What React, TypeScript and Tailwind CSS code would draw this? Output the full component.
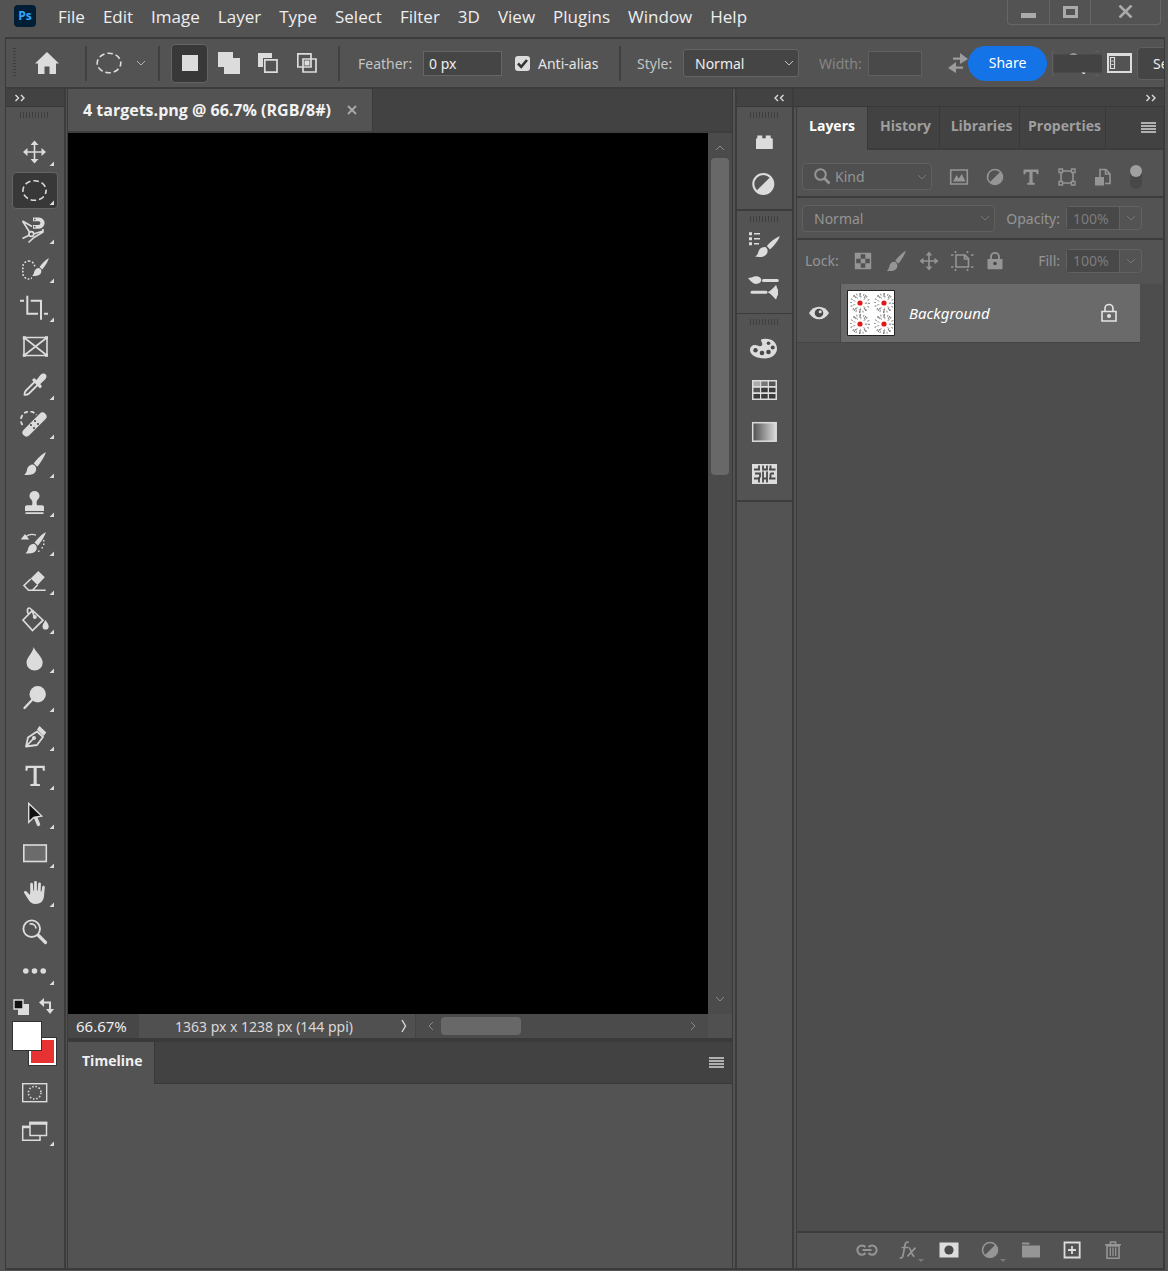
import React from 'react';
import { clsx } from 'clsx';

const menus = ['File', 'Edit', 'Image', 'Layer', 'Type', 'Select', 'Filter', '3D', 'View', 'Plugins', 'Window', 'Help'];

const BRUSH_HANDLE = 'M24.8 2c-4.2 2.2-9 7.4-12 11.4l3.4 3.4c3.4-3.8 7.6-10.4 8.6-14.8z';
const BRUSH_TIP =
  'M11.8 14.6c-3 0-5.2 2.4-5.8 5.2-.4 2.2-1.2 4-2.8 5 4.4.7 9.6.3 11.4-3.2.9-1.9.8-3.7-.2-5.1-.6-.9-1.5-1.7-2.6-1.9z';

function Brush({ transform }: { transform?: string }) {
  return <path transform={transform} d={`${BRUSH_HANDLE} ${BRUSH_TIP}`} />;
}

// every glyph is drawn in the same 28px box, light fill by default
const line = { fill: 'none', stroke: 'currentColor', strokeWidth: 1.6 };

const tools: { label: string; icon: React.ReactNode; active?: boolean; single?: boolean }[] = [
  {
    label: 'Move Tool',
    icon: (
      <>
        <path d="M13.5 5v18M4.500 14h18" {...line} />
        <path d="M13.500 2.500l4 4.500h-8zM13.500 25.500l4-4.500h-8zM2 14l4.500-4v8zM25 14l-4.500-4v8z" />
      </>
    ),
  },
  {
    label: 'Elliptical Marquee Tool',
    active: true,
    icon: <ellipse cx="13.5" cy="13.5" rx="11.6" ry="9.8" {...line} strokeDasharray="5.6 2.9" strokeDashoffset="2" />,
  },
  {
    label: 'Magnetic Lasso Tool',
    icon: (
      <>
        <path d="M1.500 5l7.300 11.500M1.500 5l9.500 5.500M1.500 22.500l7-3.500M7.500 26.500l5.500-5 9-5.500v-3M12.500 18l9.500-3" {...line} />
        <circle cx="10.300" cy="18" r="2.400" {...line} />
        <path d="M12 1.500h6a5.600 5.600 0 0 1 0 11.200h-6V9h5.500a1.900 1.900 0 0 0 0-3.800H12z" />
        <path d="M13 2.700h1.500v1.500H13zM13 10h1.500v1.500H13z" fill="#535353" />
      </>
    ),
  },
  {
    label: 'Quick Selection Tool',
    icon: (
      <>
        <rect x="1.800" y="6" width="12" height="18" rx="6" {...line} strokeDasharray="1.700 1.700" />
        <path d="M11 15l5-5 8 2-6 12h-7z" fill="#535353" />
        <Brush transform="translate(8.500 1.500) scale(.78)" />
      </>
    ),
  },
  {
    label: 'Crop Tool',
    icon: <path d="M-1 6.700h4M9.700 6.700H20v19M6.300 1.700v18H17M23 19.700h4" {...line} strokeWidth="2" />,
  },
  {
    label: 'Frame Tool',
    single: true,
    icon: (
      <>
        <path d="M3 4.500h23v18H3zM3 4.500l23 18M26 4.500l-23 18" {...line} />
        <path d="M1.800 3.300h3v3h-3zM24 3.300h3v3h-3zM1.800 20.800h3v3h-3zM24 20.800h3v3h-3z" />
      </>
    ),
  },
  {
    label: 'Eyedropper Tool',
    icon: (
      <>
        <path d="M14.500 9L5 18.500c-1 1-1.500 2.500-1.500 4.300 1.800.2 3.400-.3 4.500-1.300L17.500 12" {...line} strokeWidth="1.800" />
        <path d="M11 8l2-2 2.500 2 3.500-4.500c2-2.400 4.700-2.300 5.800-1 1.100 1.300 1 3.500-1 5.200L19.300 12l1.700 2.500-2 2z" />
      </>
    ),
  },
  {
    label: 'Spot Healing Brush Tool',
    icon: (
      <>
        <path d="M1.500 14A8 8 0 1 1 15.500 4" {...line} strokeWidth="1.800" strokeDasharray="4 2.500" />
        <path d="M5.500 21.500L21.500 5.500" stroke="currentColor" strokeWidth="8" strokeLinecap="round" />
        <g fill="#444">
          <circle cx="10" cy="14" r="1" /><circle cx="13" cy="17" r="1" /><circle cx="14" cy="10" r="1" />
          <circle cx="17" cy="13" r="1" />
        </g>
      </>
    ),
  },
  { label: 'Brush Tool', icon: <Brush /> },
  {
    label: 'Clone Stamp Tool',
    icon: (
      <path d="M13.500 2a5 5 0 0 0-2.700 9.200c.8.900.7 3.400.2 5.100H6c-1.300 0-2 .8-2 2V22h19v-3.700c0-1.200-.7-2-2-2h-5c-.5-1.700-.6-4.200.2-5.100A5 5 0 0 0 13.500 2zM4.500 23.200h18V25h-18z" />
    ),
  },
  {
    label: 'History Brush Tool',
    icon: (
      <>
        <path d="M-.3 11.500L4 6l4.200 5.500z" />
        <path d="M5 8.500c3-2.300 6.500-2.600 10-1.300" {...line} strokeWidth="1.300" />
        <Brush transform="translate(1.500 2) scale(.94)" />
        <path d="M22 12h1.500v1.500H22zM22 15.500h1.500V17H22zM20.500 19H22v1.500h-1.500zM17 22.500h1.500V24H17z" />
      </>
    ),
  },
  {
    label: 'Eraser Tool',
    icon: (
      <>
        <path d="M17.300 4l6.500 6.300-7.300 7.700-6.800-6.500z" />
        <path d="M9.700 12L3 18.500l4.500 4.800h4L16.500 18M8 23.300h16.700" {...line} />
      </>
    ),
  },
  {
    label: 'Paint Bucket Tool',
    icon: (
      <>
        <path d="M2 14L11.500 4.500 22 14.200 11.500 24.500zM7.500 8.500C5.500 4 6.500 1.800 8.500 2c2 .2 3 3 4.500 8" {...line} strokeWidth="1.700" />
        <circle cx="13.800" cy="11" r="2" />
        <path d="M24.500 14c1 2.200 3.200 4 3.200 6.400a3.100 3.100 0 0 1-6.200 0c0-2.400 2-4.200 3-6.400z" />
      </>
    ),
  },
  { label: 'Blur Tool', icon: <path d="M12.700 2c1.200 4.500 9 9.500 9 15.500a8.100 8 0 0 1-16.200 0C5.500 12.500 11.700 8 12.700 2z" /> },
  {
    label: 'Dodge Tool',
    icon: (
      <>
        <circle cx="16.700" cy="10.300" r="8.200" />
        <path d="M12 15l-8.500 9" stroke="currentColor" strokeWidth="2.400" strokeLinecap="round" />
      </>
    ),
  },
  {
    label: 'Pen Tool',
    icon: (
      <>
        <path d="M5 23.500l2-9 9-6 6 5.500-6 8zM5 23.500l7-7.500" {...line} strokeWidth="1.800" strokeLinejoin="round" />
        <circle cx="13" cy="15" r="2" />
        <path d="M18.500 3l6.800 6.500-2.800 3.500-6.500-6.500z" />
      </>
    ),
  },
  {
    label: 'Horizontal Type Tool',
    icon: <path d="M4.500 3.800h19.300v5h-1.900l-.5-2.700h-5.700v15.700l3.300.5V24H9.300v-1.700l3.300-.5V6.100H6.900l-.5 2.700H4.500z" />,
  },
  {
    label: 'Path Selection Tool',
    icon: (
      <>
        <path d="M14 15l3.500 8.500" stroke="currentColor" strokeWidth="3.400" strokeLinecap="round" />
        <path d="M7.700 2.500v18.800l5-4.800 8-1.500z" fill="#111" stroke="currentColor" strokeWidth="1.400" />
      </>
    ),
  },
  {
    label: 'Rectangle Tool',
    icon: <rect x="2.800" y="5" width="22.500" height="16.500" fill="#6b6b6b" stroke="currentColor" strokeWidth="1.600" />,
  },
  {
    label: 'Hand Tool',
    icon: (
      <path d="M9.200 14.500V5.200c0-2 2.700-2 2.800 0l.3 6.300h.8V3.300c0-1.900 2.800-1.900 2.800 0v8.200h.8L17.200 5c.1-2 2.700-1.800 2.700 0l-.2 7.500h.8l.7-4.500c.3-1.800 2.700-1.500 2.600.3L23 17c-.3 5-3.500 8-8.500 8-3.400 0-5.400-1.700-7-4.300L3.200 14c-.9-1.700 1.200-2.800 2.500-1.500l3 3.200z" />
    ),
  },
  {
    label: 'Zoom Tool',
    single: true,
    icon: (
      <>
        <circle cx="10.700" cy="10.700" r="8.300" {...line} strokeWidth="1.900" />
        <path d="M8.500 6c3.500-.7 6 1 6.600 4.500" {...line} />
        <path d="M17.500 17.500l7 7" stroke="currentColor" strokeWidth="3.200" strokeLinecap="round" />
      </>
    ),
  },
  {
    label: 'Edit Toolbar',
    icon: (
      <>
        <circle cx="4.800" cy="14" r="2.800" /><circle cx="13.500" cy="14" r="2.800" /><circle cx="22.200" cy="14" r="2.800" />
      </>
    ),
  },
];

const screenTools = [
  {
    label: 'Quick Mask Mode',
    single: true,
    icon: (
      <>
        <rect x="1.700" y="4.700" width="24" height="18" {...line} strokeWidth="1.400" />
        <circle cx="13.700" cy="13.700" r="6.300" {...line} strokeDasharray="1.500 1.800" />
      </>
    ),
  },
  {
    label: 'Screen Mode',
    icon: (
      <>
        <path d="M8.500 8.500H1.700v13.800H19v-4.500M1 8.500h7.500" {...line} strokeWidth="1.500" />
        <path d="M9 4.500h16.500v13H9z" {...line} strokeWidth="1.500" />
        <path d="M8.300 3.700h18v3h-18zM1 7.800h8v2.500H1z" />
      </>
    ),
  },
];

const dockGroups = [
  [
    {
      label: 'Plugins',
      icon: <path d="M7 13.500c0-.8.500-1.300 1.300-1.300V9.500h5v2.700h3.400V9.500h5v2.700h.8c.8 0 1.300.5 1.300 1.300V23H7z" />,
    },
    {
      label: 'Adjustments',
      icon: (
        <>
          <circle cx="14.300" cy="16" r="10" {...line} strokeWidth="2" />
          <path d="M21.400 8.900a10 10 0 0 1-14.200 14.200z" />
        </>
      ),
    },
  ],
  [
    {
      label: 'Brush Settings',
      icon: (
        <>
          <path d="M0 2.300h3v3H0zM0 7.300h3v3H0zM0 12.300h3v3H0zM5 3h6v1.600H5zM5 8h6v1.600H5zM5 13h5v1.600H5z" />
          <path d="M30.800 6c-5 2.300-9.500 6-13 10l3.200 3.400c4-3.600 8.500-9 9.800-13.400zM16 17c-3.500 0-5.800 2-6.700 5-.5 2.400-1.600 3.800-3.300 4.600 4.500 1 10 .5 12-3 1-2 .8-4-.3-5.400-.5-.7-1-1.100-1.700-1.200z" />
        </>
      ),
    },
    {
      label: 'Brushes',
      icon: (
        <>
          <path d="M-1 6c3.500 0 5-1.800 8-1.800s5.300 1.600 5.300 3.900S10 12 7 12C4 12 2 9.500-1 6zM18.500 20.300c2.500-1 5.500-4 8.500-7.300 1.300 1.500.5 3.500 2 4.500v5.600c-1.500 1-.7 3-2 4.500-3-3.300-6-6.300-8.500-7.300z" />
          <path d="M14.500 8.500h13.800M3 20.300h14" stroke="currentColor" strokeWidth="3" strokeLinecap="round" />
        </>
      ),
    },
  ],
  [
    {
      label: 'Color',
      icon: (
        <>
          <path d="M15.500 5.700C23 5.200 28 9.500 28 15.500s-5.500 10-12.500 10S1 22.500 1 17c0-3 2.200-5 5-5 2 0 3.300 1.200 5 1.200 1.500 0 2.300-1 2.300-2.300 0-1.800-1.300-2.400-1.300-3.700 0-1 1.500-1.400 3.500-1.500z" />
          <g fill="#4a4a4a">
            <circle cx="6.500" cy="17.300" r="2.200" /><circle cx="13" cy="20" r="2.300" /><circle cx="19.500" cy="19" r="2.300" />
            <circle cx="23.700" cy="14.500" r="2" /><circle cx="19.500" cy="10.300" r="1.800" />
          </g>
        </>
      ),
    },
    {
      label: 'Swatches',
      icon: (
        <>
          <path d="M3 5h25v20H3z" />
          <path d="M4.500 6.500h6.500V11H4.500z" fill="#aaa" />
          <path d="M12.200 6.500h6.500V11h-6.500z" fill="#777" />
          <path d="M20 6.500h6.500V11H20zM4.500 12.700h6.500v4.500H4.500z" fill="#555" />
          <path d="M12.200 12.700h6.500v4.500h-6.500zM20 12.700h6.500v4.500H20zM4.500 19h6.500v4.500H4.500zM12.200 19h6.500v4.500h-6.500zM20 19h6.500v4.500H20z" fill="#3a3a3a" />
        </>
      ),
    },
    {
      label: 'Gradients',
      icon: (
        <>
          <defs>
            <linearGradient id="ramp">
              <stop stopColor="#505050" />
              <stop offset="1" stopColor="#dcdcdc" />
            </linearGradient>
          </defs>
          <rect x="3.700" y="5.700" width="23.500" height="18.500" fill="url(#ramp)" stroke="currentColor" strokeWidth="1.500" />
        </>
      ),
    },
    {
      label: 'Patterns',
      icon: (
        <>
          <path d="M3 5h25v20H3z" />
          <path
            d="M5 10.500h6M10 6.500v5M14 6.500v4h4v-4M21.500 6.500v5M20 10.500h6.500M6 14.500h5v4M5 19.500h6M10 18v5.500M14 12.500v6M18 12.500v6M14 23.500v-4h4v4M21.500 14.500v5M20 19.500h6.500M21.500 14.500H25"
            stroke="#484848"
            strokeWidth="1.800"
            fill="none"
          />
        </>
      ),
    },
  ],
];

const filterIcons = [
  {
    label: 'Filter for pixel layers',
    icon: (
      <>
        <path d="M3.700 5h16.600v14H3.700z" {...line} />
        <path d="M6 16.500l3.500-6.500 2.300 3.500 3-4.500 3.700 7.500z" />
      </>
    ),
  },
  {
    label: 'Filter for adjustment layers',
    icon: (
      <>
        <circle cx="12" cy="12" r="7.500" {...line} />
        <path d="M17.500 6.500a7.800 7.800 0 0 1-11 11z" />
      </>
    ),
  },
  {
    label: 'Filter for type layers',
    icon: <path d="M4.500 4.500h15v4.700h-1.800l-.7-2.300h-3.400v10.600l2.200.5v1.700H8.200V18l2.200-.5V6.900H7l-.7 2.300H4.500z" />,
  },
  {
    label: 'Filter for shape layers',
    icon: (
      <>
        <path d="M6 6h12v12H6z" {...line} />
        <path d="M4 4h3.500v3.500H4zM16.500 4H20v3.500h-3.500zM4 16.500h3.500V20H4zM16.500 16.500H20V20h-3.500z" fill="#535353" stroke="currentColor" strokeWidth="1.400" />
      </>
    ),
  },
  {
    label: 'Filter for smart objects',
    icon: (
      <>
        <path d="M9 12V4.500h6L19 9v9.500h-5M14.500 4.500V9H19" {...line} />
        <path d="M4 12h9v8.500H4z" />
      </>
    ),
  },
];

const lockIcons = [
  {
    label: 'Lock transparent pixels',
    icon: (
      <>
        <path d="M4.500 4.500h15v15h-15z" {...line} strokeWidth="1.400" />
        <path d="M5 5h4.700v4.700H5zM14.300 5H19v4.700h-4.700zM9.700 9.700h4.600v4.600H9.700zM5 14.300h4.700V19H5zM14.300 14.300H19V19h-4.700z" />
      </>
    ),
  },
  { label: 'Lock image pixels', icon: <Brush transform="translate(0 0) scale(.88)" /> },
  {
    label: 'Lock position',
    icon: (
      <>
        <path d="M12 5v14M5 12h14" {...line} />
        <path d="M12 2.500l3.300 4H8.700zM12 21.500l3.300-4H8.700zM2.500 12l4-3.300v6.600zM21.500 12l-4-3.300v6.600z" />
      </>
    ),
  },
  {
    label: 'Prevent auto-nesting',
    icon: (
      <>
        <path d="M6 6h9l3.500 3.500V18H6zM14.500 6v4h4" {...line} />
        <path d="M5.500 2v2M17.500 2v2M1 6h2.500M21 6h2.500M5.500 20v2M17.500 20v2M1 18h2.500M21 18h2.500" {...line} />
      </>
    ),
  },
  {
    label: 'Lock all',
    icon: (
      <>
        <path d="M8 10.500V7.800a4 4 0 0 1 8 0v2.700" {...line} strokeWidth="1.800" />
        <path d="M4.500 10h15v9c0 .8-.5 1.300-1.300 1.300H5.800c-.8 0-1.300-.5-1.300-1.300z" />
        <circle cx="12" cy="14.500" r="1.700" fill="#444" />
      </>
    ),
  },
];

const footerIcons = [
  {
    label: 'Link layers',
    icon: <path d="M10.500 9.200A4.600 4.600 0 1 0 10.500 15M13.500 9.200A4.600 4.600 0 1 1 13.500 15M7.500 12h9" {...line} strokeWidth="2" />,
  },
  {
    label: 'Layer style',
    icon: <path d="M13 4.200c-2.500-.7-3.600.5-4 2.800L7 17.500c-.3 1.800-1.300 2.700-3.300 2.300M5.500 9.500H12M12.500 9.500c2.500 0 3 9 6 8.800M19.500 9.700L11.500 18.300" {...line} strokeWidth="1.700" />,
    menu: true,
  },
  {
    label: 'Add layer mask',
    bright: true,
    icon: (
      <>
        <path d="M2.500 4.500h19v15h-19z" />
        <circle cx="12" cy="12" r="4.600" fill="#4a4a4a" />
      </>
    ),
  },
  { label: 'New adjustment layer', icon: filterIcons[1].icon, menu: true },
  { label: 'New group', icon: <path d="M3 4.500h7.500V6.500H3zM3 7.500h18V18.500c0 .7-.3 1-1 1H4c-.7 0-1-.3-1-1z" /> },
  {
    label: 'New layer',
    bright: true,
    icon: <path d="M4.500 4.500h15.200v15H4.500zM12 8v8M8 12h8" {...line} strokeWidth="1.800" />,
  },
  {
    label: 'Delete layer',
    icon: (
      <>
        <path d="M6 8h12v12.300H6zM4 6.800h16M9.500 6V4h5v2" {...line} />
        <path d="M9.300 9.500v8.500M12 9.500v8.500M14.700 9.500v8.500" {...line} strokeWidth="1.300" />
      </>
    ),
  },
];

function Icon24({ children, className }: { children: React.ReactNode; className?: string }) {
  return (
    <svg width="24" height="24" viewBox="0 0 24 24" fill="currentColor" className={className}>
      {children}
    </svg>
  );
}

function Chevron({ dir = 'down', className }: { dir?: 'down' | 'up' | 'left' | 'right'; className?: string }) {
  const paths = { down: 'M2 4l4 4 4-4', up: 'M2 8l4-4 4 4', left: 'M8 2L4 6l4 4', right: 'M4 2l4 4-4 4' };
  return (
    <svg width="12" height="12" viewBox="0 0 12 12" fill="none" stroke="currentColor" className={className}>
      <path d={paths[dir]} />
    </svg>
  );
}

function Collapse({ dir }: { dir: 'left' | 'right' }) {
  return (
    <button aria-label={dir === 'left' ? 'Expand panels' : 'Collapse panels'} className="text-[#dcdcdc]">
      <svg width="12" height="8" viewBox="0 0 12 8" fill="none" stroke="currentColor" strokeWidth="1.4">
        <path d={dir === 'left' ? 'M5 1L2 4l3 3M10.500 1l-3 3 3 3' : 'M1.500 1l3 3-3 3M7 1l3 3-3 3'} />
      </svg>
    </button>
  );
}

function Grip() {
  return (
    <svg width="30" height="6" viewBox="0 0 30 6" className="mx-auto text-[#3e3e3e]">
      <path d="M0 3h30" stroke="currentColor" strokeWidth="6" strokeDasharray="1 2" />
    </svg>
  );
}

function MenuLines() {
  return (
    <button aria-label="Panel menu" className="text-[#b0b0b0]">
      <svg width="15" height="11" viewBox="0 0 15 11" fill="currentColor">
        <path d="M0 0h15v2H0zM0 3h15v2H0zM0 6h15v2H0zM0 9h15v2H0z" />
      </svg>
    </button>
  );
}

function ToolButton({ tool }: { tool: { label: string; icon: React.ReactNode; active?: boolean; single?: boolean } }) {
  return (
    <button
      aria-label={tool.label}
      className={clsx(
        'my-px flex h-[37px] w-[46px] shrink-0 items-center justify-center rounded-sm border text-[#dcdcdc]',
        tool.active ? 'border-[#646464] bg-[#383838]' : 'border-transparent'
      )}
    >
      <svg width="40" height="28" viewBox="-6 0 40 28" fill="currentColor" className="shrink-0">
        {tool.icon}
        {!tool.single && <path d="M33 23.500v4.500h-4.500z" />}
      </svg>
    </button>
  );
}

function MenuBar() {
  return (
    <header className="flex h-[37px] items-start justify-between pl-[14px] pr-[7px]">
      <div className="flex items-center">
        <div className="mt-[2px] flex size-[22px] items-center justify-center rounded-[4px] bg-[#001e36] font-['Open_Sans',sans-serif] text-[12px] font-bold text-[#31a8ff]">
          Ps
        </div>
        <nav className="ml-[22px] flex gap-[18px] pt-1 font-['Open_Sans',sans-serif] text-[17px] leading-[26px] text-[#eeeeee]">
          {menus.map((m) => (
            <button key={m}>{m}</button>
          ))}
        </nav>
      </div>
      <div className="flex h-[25px] rounded-b border border-t-0 border-[#666] text-[#aaa]">
        <button aria-label="Minimize" className="flex w-[42px] items-end justify-center border-r border-[#666] pb-[6px]">
          <span className="h-[5px] w-[15px] bg-current" />
        </button>
        <button aria-label="Maximize" className="flex w-[41px] items-center justify-center border-r border-[#666]">
          <span className="h-3 w-[15px] border-[3px] border-current" />
        </button>
        <button aria-label="Close" className="flex w-[69px] justify-center pt-[5px]">
          <svg width="15" height="13" viewBox="0 0 15 13" fill="none" stroke="currentColor" strokeWidth="2.600">
            <path d="M1.500 .500l12 12M13.500 .500l-12 12" />
          </svg>
        </button>
      </div>
    </header>
  );
}

function Separator() {
  return <div className="h-[35px] w-[2px] shrink-0 bg-[#404040]" />;
}

function OptionsBar() {
  return (
    <div className="flex h-[52px] items-center overflow-hidden border-y-2 border-[#3c3c3c] text-[#c4c4c4]">
      <svg width="3" height="30" viewBox="0 0 3 30" className="ml-[7px] shrink-0 text-[#3e3e3e]">
        <path d="M1.500 0v30" stroke="currentColor" strokeWidth="3" strokeDasharray="1 2" />
      </svg>
      <button aria-label="Home" className="ml-[18px] shrink-0 text-[#dcdcdc]">
        <svg width="26" height="24" viewBox="0 0 26 24" fill="currentColor">
          <path d="M13 1L1 12.500h3V23h6.500v-7.500h5V23H22V12.500h3z" />
        </svg>
      </button>
      <div className="w-[25px] shrink-0" />
      <Separator />
      <button aria-label="Tool presets" className="ml-[9px] flex w-[51px] shrink-0 items-center justify-between text-[#dcdcdc]">
        <svg width="26" height="22" viewBox="0 0 26 22">
          <ellipse cx="13" cy="11" rx="11.800" ry="9.800" {...line} strokeDasharray="5.600 2.900" strokeDashoffset="2" />
        </svg>
        <Chevron className="text-[#b5b5b5]" />
      </button>
      <div className="w-[11px] shrink-0" />
      <Separator />
      <div className="ml-[11px] flex shrink-0 items-center text-[#dcdcdc]">
        <button aria-label="New selection" className="flex h-[39px] w-[37px] items-center justify-center rounded-sm border border-[#646464] bg-[#383838]">
          <span className="size-4 bg-current" />
        </button>
        <button aria-label="Add to selection" className="flex w-[42px] justify-center">
          <svg width="22" height="22" viewBox="0 0 22 22" fill="currentColor">
            <path d="M0 0h15v6h7v16H6v-7H0z" />
          </svg>
        </button>
        <button aria-label="Subtract from selection" className="flex w-9 justify-center">
          <svg width="20" height="20" viewBox="0 0 20 20" fill="currentColor">
            <path d="M0 0h14v5H5v9H0z" />
            <path d="M6.800 6.800H19v12.400H6.800z" {...line} strokeWidth="1.700" />
          </svg>
        </button>
        <button aria-label="Intersect with selection" className="flex w-[42px] justify-center">
          <svg width="20" height="20" viewBox="0 0 20 20" fill="currentColor">
            <path d="M.8.800H14v13.200H.8zM6 6h13v13H6z" {...line} strokeWidth="1.700" />
            <path d="M7.500 7.500h5v5h-5z" />
          </svg>
        </button>
      </div>
      <div className="w-[10px] shrink-0" />
      <Separator />
      <label htmlFor="feather" className="ml-[18px] w-[65px] shrink-0">Feather:</label>
      <input id="feather" defaultValue="0 px" className="h-[25px] w-[79px] shrink-0 border border-[#666] bg-[#454545] px-[5px] text-[#eee]" />
      <label className="ml-[13px] flex w-[104px] shrink-0 items-center gap-2 whitespace-nowrap text-[#e4e4e4]">
        <span className="relative flex size-[15px] items-center justify-center">
          <input type="checkbox" defaultChecked className="size-[15px] appearance-none rounded-[3px] bg-[#dcdcdc]" />
          <svg width="11" height="11" viewBox="0 0 11 11" className="pointer-events-none absolute" fill="none" stroke="#333" strokeWidth="2.600">
            <path d="M1 5.500l3.200 3.300L10 2" />
          </svg>
        </span>
        Anti-alias
      </label>
      <Separator />
      <label htmlFor="style" className="ml-[16px] w-[46px] shrink-0">Style:</label>
      <div className="relative w-[116px] shrink-0">
        <select id="style" className="h-[28px] w-full appearance-none rounded-[3px] border border-[#646464] bg-[#454545] pl-[11px] text-[#eee]">
          <option>Normal</option>
        </select>
        <Chevron className="pointer-events-none absolute right-1 top-2" />
      </div>
      <label htmlFor="width" className="ml-5 w-[49px] shrink-0 text-[#868686]">Width:</label>
      <input id="width" disabled className="h-[25px] w-[54px] shrink-0 border border-[#5f5f5f] bg-[#494949]" />
      <button aria-label="Swap width and height" className="ml-[26px] shrink-0 text-[#9c9c9c]">
        <svg width="20" height="20" viewBox="0 0 20 20" fill="currentColor">
          <path d="M12 0l8 6-8 5V6.800H5V4.500h7zM8 9L0 15l8 5v-4.200h7v-2.300H8z" />
        </svg>
      </button>
      <button className="h-[35px] w-[79px] shrink-0 rounded-full bg-[#1473e6] pb-px text-white">Share</button>
      <button aria-label="Search" className="ml-[5px] shrink-0">
        <svg width="50" height="25" viewBox="0 0 50 25" fill="none">
          <path d="M3 .5H.5v24H3M43 .5h4M43 24.500h4" stroke="#606060" />
          <path d="M1.500 3.500H50v18H1.500z" fill="#434343" />
          <path d="M17.500 3.500c2.500-1.300 5.500-1.300 8 0zM29.500 21.500h4c-.5 1.700-2 2-3 1z" fill="#dcdcdc" />
        </svg>
      </button>
      <button aria-label="Workspace" className="ml-[5px] shrink-0 text-[#dcdcdc]">
        <svg width="25" height="20" viewBox="0 0 25 20">
          <path d="M1 1h23v18H1z" {...line} strokeWidth="2" />
          <path d="M1 1.500h23" {...line} strokeWidth="3" />
          <path d="M3.500 4.500h4v11h-4zM4.500 8h2M4.500 11.500h2" {...line} strokeWidth="1.200" />
        </svg>
      </button>
      <button className="ml-[5px] h-[33px] w-[130px] shrink-0 whitespace-nowrap rounded border border-[#5f5f5f] bg-[#454545] pl-[15px] text-left text-[#eee]">
        Select and Mask...
      </button>
    </div>
  );
}

function Toolbar() {
  return (
    <aside className="flex w-[60px] shrink-0 flex-col border-r-2 border-[#3c3c3c]">
      <div className="flex h-[18px] items-center border-b border-[#383838] bg-[#424242] pl-2">
        <Collapse dir="right" />
      </div>
      <div className="h-[25px] pt-[5px]">
        <Grip />
      </div>
      <div className="flex flex-col items-center">
        {tools.map((tool) => (
          <ToolButton key={tool.label} tool={tool} />
        ))}
      </div>
      <div className="relative h-[83px]">
        <button aria-label="Default colors" className="absolute left-[7px] top-[9px]">
          <svg width="16" height="16" viewBox="0 0 16 16">
            <path d="M5 5h11v11H5z" fill="#dcdcdc" />
            <path d="M1 1h9v9H1z" fill="#111" stroke="#dcdcdc" strokeWidth="1.400" />
          </svg>
        </button>
        <button aria-label="Swap colors" className="absolute left-[33px] top-2 text-[#dcdcdc]">
          <svg width="15" height="16" viewBox="0 0 15 16" fill="currentColor">
            <path d="M3 4.500h8V12" {...line} strokeWidth="2" />
            <path d="M0 4.500L5 0v9zM7 11h8l-4 5z" />
          </svg>
        </button>
        <button aria-label="Background color" className="absolute left-[22px] top-[47px] size-[29px] border border-[#333] bg-white p-[2px]">
          <span className="block size-full bg-[#e63232]" />
        </button>
        <button aria-label="Foreground color" className="absolute left-[6px] top-[31px] size-[30px] border border-[#333] bg-white" />
      </div>
      <div className="flex flex-col items-center">
        {screenTools.map((tool) => (
          <ToolButton key={tool.label} tool={tool} />
        ))}
      </div>
    </aside>
  );
}

function DocumentArea() {
  return (
    <main className="ml-px flex min-w-0 flex-1 flex-col border-x border-[#3a3a3a]">
      <div className="flex h-[44px] border-b-2 border-[#3e3e3e] bg-[#424242] font-['Open_Sans',sans-serif]">
        <div className="flex items-center gap-4 border-r border-[#3a3a3a] bg-[#535353] px-[15px]">
          <span className="whitespace-nowrap text-[16px] font-bold text-[#f2f2f2]">4 targets.png @ 66.7% (RGB/8#)</span>
          <button aria-label="Close document" className="text-[#aaa]">
            <svg width="10" height="10" viewBox="0 0 10 10" stroke="currentColor" strokeWidth="1.800">
              <path d="M1 1l8 8M9 1l-8 8" />
            </svg>
          </button>
        </div>
      </div>
      <div className="flex flex-1">
        <div className="flex-1 bg-black" />
        <div className="flex w-[24px] flex-col items-center bg-[#4b4b4b] py-[9px] text-[#8a8a8a]">
          <Chevron dir="up" />
          <div className="w-full flex-1 px-[3px] pt-1">
            <div className="h-[38%] rounded-sm bg-[#686868]" />
          </div>
          <Chevron dir="down" />
        </div>
      </div>
      <div className="flex h-[24px] items-center bg-[#4b4b4b] text-[#d8d8d8]">
        <div className="flex h-full w-[71px] items-center bg-[#474747] pl-2 text-[15px] text-[#eee]">66.67%</div>
        <div className="flex h-full w-[277px] items-center justify-between border-r border-[#444] bg-[#505050] pl-9 pr-[7px]">
          <span>1363 px x 1238 px (144 ppi)</span>
          <svg width="8" height="14" viewBox="0 0 8 14" fill="none" stroke="currentColor" strokeWidth="1.400">
            <path d="M2 1l3.500 6L2 13" />
          </svg>
        </div>
        <div className="flex h-full flex-1 items-center px-[9px] text-[#8a8a8a]">
          <Chevron dir="left" />
          <div className="flex-1 px-1">
            <div className="h-[18px] w-[33%] rounded-sm bg-[#686868]" />
          </div>
          <Chevron dir="right" />
        </div>
        <div className="h-full w-[24px] bg-[#505050]" />
      </div>
      <section className="h-[230px] border-t-4 border-[#3a3a3a]">
        <div className="flex h-[42px] items-center justify-between border-b border-[#383838] bg-[#424242] pr-2">
          <h2 className="flex h-[42px] w-[87px] items-center border-r border-[#383838] bg-[#535353] pb-1 pl-[14px] font-['Open_Sans',sans-serif] text-[14px] font-bold text-[#f0f0f0]">
            Timeline
          </h2>
          <MenuLines />
        </div>
      </section>
    </main>
  );
}

function Dock() {
  return (
    <aside className="ml-[2px] flex w-[59px] shrink-0 flex-col border-x-2 border-[#3c3c3c]">
      <div className="flex h-[18px] items-center justify-end border-b border-[#383838] bg-[#424242] pr-[7px]">
        <Collapse dir="left" />
      </div>
      {dockGroups.map((group, i) => (
        <div key={i} className={clsx('pb-1 border-[#3c3c3c]', i === 1 ? 'border-b' : 'border-b-2')}>
          <div className="h-[14px] pt-[5px]">
            <Grip />
          </div>
          {group.map((item) => (
            <button key={item.label} aria-label={item.label} className="flex h-[42px] w-full items-center justify-center text-[#dcdcdc]">
              <svg width="32" height="32" viewBox="0 0 32 32" fill="currentColor" className="overflow-visible">
                {item.icon}
              </svg>
            </button>
          ))}
        </div>
      ))}
    </aside>
  );
}

function PercentField({ id, label }: { id: string; label: string }) {
  return (
    <div className="ml-auto flex items-center gap-[6px]">
      <label htmlFor={id}>{label}</label>
      <div className="flex h-6 rounded-sm border border-[#626262]">
        <input id={id} disabled defaultValue="100%" className="w-[52px] bg-[#484848] pl-[6px] text-[#7c7c7c]" />
        <button aria-label={`${label} slider`} className="flex w-[22px] items-center justify-center border-l border-[#626262] text-[#777]">
          <Chevron />
        </button>
      </div>
    </div>
  );
}

function TargetBurst({ x, y }: { x: number; y: number }) {
  return (
    <g transform={`translate(${x} ${y})`}>
      <circle r="9" fill="none" stroke="#8a8a8a" strokeWidth="2" strokeDasharray="1 2.500" />
      <circle r="6" fill="none" stroke="#aaa" strokeWidth="2.500" strokeDasharray="1 3" />
      <path d="M0-10v4M0 6v4M-6-8l2 3M6-8l-2 3M-6 8l2-3M6 8l-2-3" stroke="#777" />
      <circle r="2.600" fill="#e01818" />
    </g>
  );
}

function LayersPanel() {
  return (
    <aside className="flex w-[370px] shrink-0 flex-col text-[#959595]">
      <div className="flex h-[18px] items-center justify-end border-b border-[#383838] bg-[#424242] pr-[7px]">
        <Collapse dir="right" />
      </div>
      <div className="ml-[2px] flex flex-1 flex-col border-x border-[#3c3c3c]">
        <div className="flex h-[43px] items-center bg-[#424242] font-['Open_Sans',sans-serif] text-[14px] font-bold text-[#9f9f9f]">
          <button className="h-full w-[71px] border-r border-[#383838] bg-[#535353] pb-[6px] text-white">Layers</button>
          <div className="flex h-full flex-1 items-center border-b-2 border-[#3c3c3c]">
            <button className="h-full w-[72px] border-r border-[#383838] pb-1 pl-1">History</button>
            <button className="h-full w-[80px] border-r border-[#383838] pb-1 pl-1">Libraries</button>
            <button className="h-full w-[86px] border-r border-[#383838] pb-1 pl-1">Properties</button>
            <div className="flex flex-1 justify-end pr-[7px]">
              <MenuLines />
            </div>
          </div>
        </div>
        <div className="flex h-[48px] items-center border-b-2 border-[#3c3c3c] pb-px pl-[5px] pt-2">
          <div className="relative flex items-center">
            <svg width="17" height="17" viewBox="0 0 17 17" className="pointer-events-none absolute left-[12px]" fill="none" stroke="currentColor">
              <circle cx="6.500" cy="6.500" r="5.300" strokeWidth="2" />
              <path d="M10.500 10.500l5 5" strokeWidth="2.600" />
            </svg>
            <select aria-label="Layer filter" disabled className="h-[27px] w-[130px] appearance-none rounded-[4px] border border-[#606060] bg-[#4f4f4f] pl-8 opacity-100">
              <option>Kind</option>
            </select>
            <Chevron className="pointer-events-none absolute right-1 text-[#777]" />
          </div>
          <div className="ml-[15px] flex gap-3">
            {filterIcons.map((f) => (
              <button key={f.label} aria-label={f.label}>
                <Icon24>{f.icon}</Icon24>
              </button>
            ))}
          </div>
          <button aria-label="Toggle layer filtering" className="ml-[15px] flex h-6 w-3 rounded-full bg-[#484848]">
            <span className="size-3 rounded-full bg-[#a0a0a0]" />
          </button>
        </div>
        <div className="flex h-[42px] items-center border-b-2 border-[#3c3c3c] pl-[5px] pr-[21px]">
          <div className="relative flex items-center">
            <select aria-label="Blend mode" disabled className="h-[27px] w-[193px] appearance-none rounded-[4px] border border-[#606060] bg-[#4f4f4f] pl-[11px] opacity-100">
              <option>Normal</option>
            </select>
            <Chevron className="pointer-events-none absolute right-1 text-[#777]" />
          </div>
          <PercentField id="opacity" label="Opacity:" />
        </div>
        <div className="flex h-[44px] items-center pb-[3px] pl-2 pr-[21px]">
          <span className="w-[46px]">Lock:</span>
          <div className="flex gap-[9px]">
            {lockIcons.map((l) => (
              <button key={l.label} aria-label={l.label}>
                <Icon24>{l.icon}</Icon24>
              </button>
            ))}
          </div>
          <PercentField id="fill" label="Fill:" />
        </div>
        <div className="flex-1 bg-[#4d4d4d]">
          <div className="mr-[23px] flex h-[59px] border-b border-[#444]">
            <button aria-label="Layer visibility" className="flex w-[44px] items-center justify-center border-r border-[#484848] bg-[#535353] text-[#dcdcdc]">
              <svg width="20" height="14" viewBox="0 0 20 14" fill="currentColor">
                <path d="M0 7c2.500-4.200 6-6.300 10-6.300S17.500 2.800 20 7c-2.500 4.200-6 6.300-10 6.300S2.500 11.200 0 7z" />
                <circle cx="10" cy="7" r="4.300" fill="#484848" />
                <circle cx="11.200" cy="5.800" r="1.500" />
              </svg>
            </button>
            <div className="flex flex-1 items-center bg-[#6a6a6a] pl-[6px] pr-[19px]">
              <svg width="48" height="46" viewBox="0 0 48 46">
                <path d="M.5.500h47v45H.5z" fill="#fff" stroke="#222" />
                <TargetBurst x={13} y={13} />
                <TargetBurst x={37} y={13} />
                <TargetBurst x={13} y={34} />
                <TargetBurst x={37} y={34} />
              </svg>
              <span className="ml-[14px] flex-1 text-[15px] italic text-white">Background</span>
              <Icon24 className="text-[#e4e4e4]">
                <path d="M8 10.500V7.500a4 4 0 0 1 8 0v3M5 10.500h14v9.500H5z" {...line} />
                <circle cx="12" cy="15" r="2" />
              </Icon24>
            </div>
          </div>
        </div>
        <div className="flex h-[37px] items-center justify-end gap-[17px] border-t-2 border-[#3c3c3c] pb-[2px] pr-[38px]">
          {footerIcons.map((f) => (
            <button key={f.label} aria-label={f.label} className={clsx('relative', f.bright ? 'text-[#dcdcdc]' : 'text-[#959595]')}>
              <Icon24>{f.icon}</Icon24>
              {f.menu && (
                <svg width="6" height="3" viewBox="0 0 6 3" fill="currentColor" className="absolute -right-1 bottom-0 opacity-60">
                  <path d="M0 0h6L3 3z" />
                </svg>
              )}
            </button>
          ))}
        </div>
      </div>
    </aside>
  );
}

export default function App() {
  return (
    <div className="flex min-h-screen flex-col overflow-hidden bg-[#535353] pb-px font-['Noto_Sans',sans-serif] text-[14px]">
      <MenuBar />
      <div className="ml-[5px] mr-[3px] flex flex-1 flex-col border-x border-b-2 border-[#3a3a3a]">
        <OptionsBar />
        <div className="flex flex-1">
          <Toolbar />
          <DocumentArea />
          <Dock />
          <LayersPanel />
        </div>
      </div>
    </div>
  );
}
